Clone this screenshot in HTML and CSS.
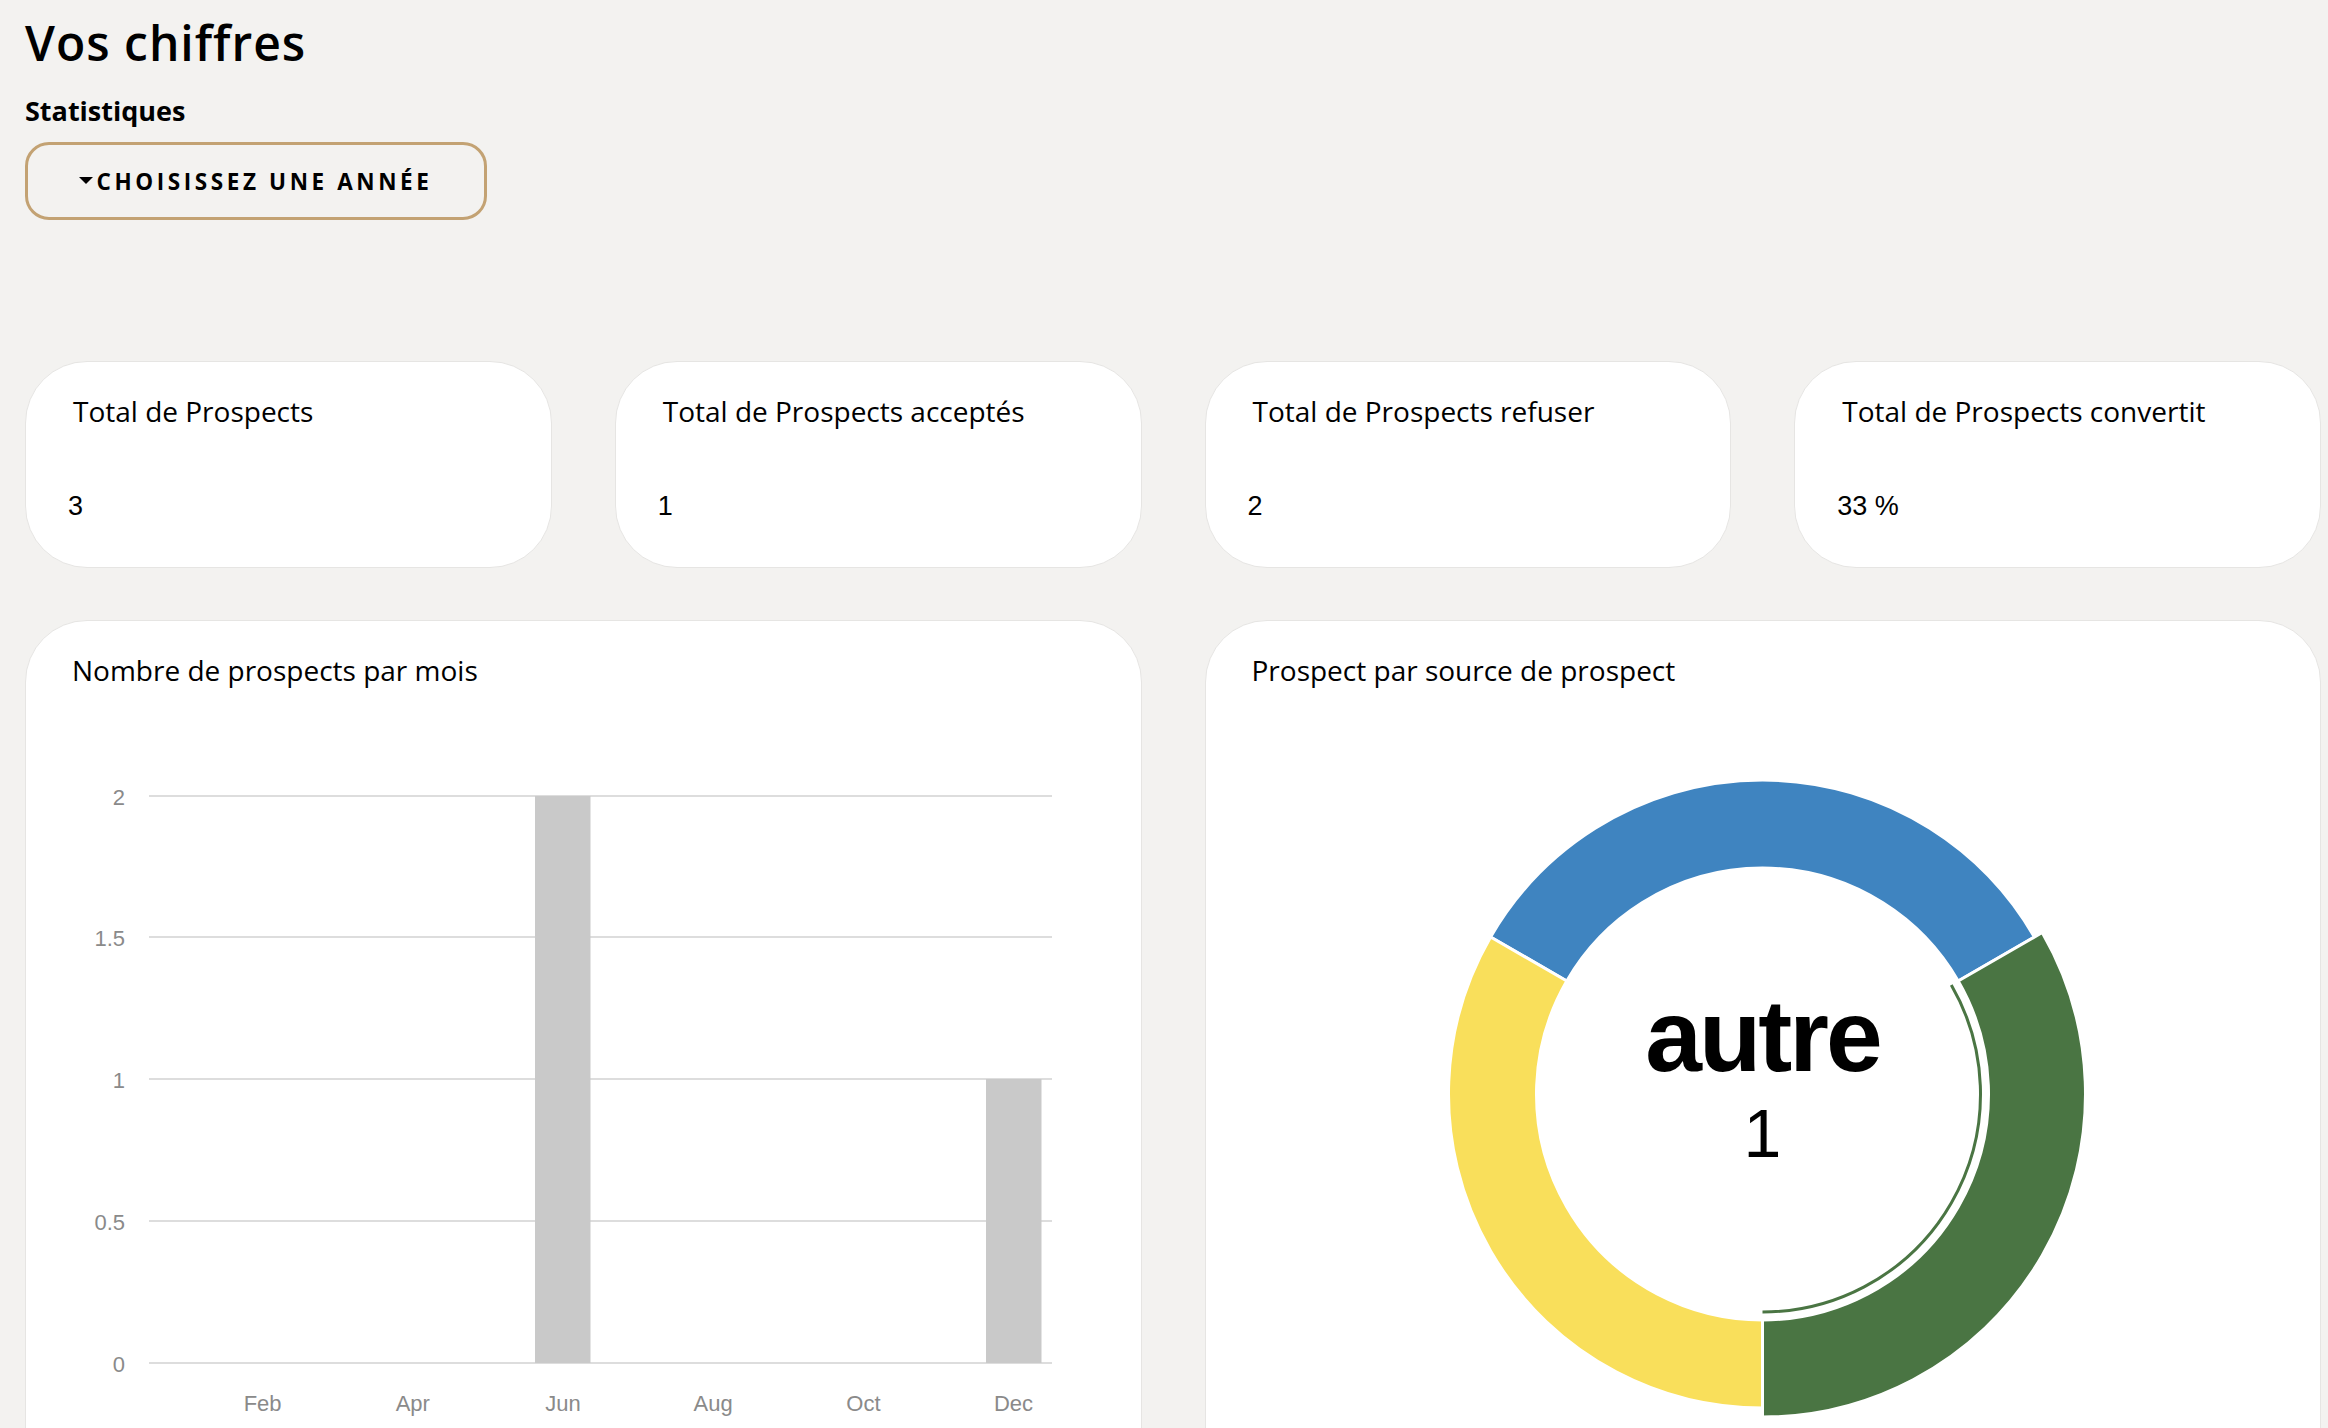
FILE: index.html
```html
<!DOCTYPE html>
<html lang="fr">
<head>
<meta charset="utf-8">
<title>Vos chiffres</title>
<link rel="stylesheet" href="styles.css">
</head>
<body>
<div class="page">
  <h1 class="page-title">Vos chiffres</h1>
  <h2 class="section-title">Statistiques</h2>
  <button class="year-btn" type="button"><span class="caret"></span>CHOISISSEZ UNE ANNÉE</button>

  <div class="grid">
    <div class="card stat">
      <div class="card-title">Total de Prospects</div>
      <div class="stat-value">3</div>
    </div>
    <div class="card stat">
      <div class="card-title">Total de Prospects acceptés</div>
      <div class="stat-value">1</div>
    </div>
    <div class="card stat">
      <div class="card-title">Total de Prospects refuser</div>
      <div class="stat-value">2</div>
    </div>
    <div class="card stat">
      <div class="card-title">Total de Prospects convertit</div>
      <div class="stat-value">33 %</div>
    </div>

    <div class="card chart">
      <div class="card-title">Nombre de prospects par mois</div>
      <svg class="chart-svg" width="1114" height="760" viewBox="1 70 1114 760">
        <g class="grid-lines">
          <line x1="124" y1="175" x2="1027" y2="175"/>
          <line x1="124" y1="316" x2="1027" y2="316"/>
          <line x1="124" y1="458" x2="1027" y2="458"/>
          <line x1="124" y1="600" x2="1027" y2="600"/>
          <line x1="124" y1="742" x2="1027" y2="742"/>
        </g>
        <rect class="bar" x="510" y="175" width="55.5" height="567"/>
        <rect class="bar" x="961" y="458" width="55.5" height="284"/>
        <g class="y-labels">
          <text x="100" y="183.5">2</text>
          <text x="100" y="324.5">1.5</text>
          <text x="100" y="466.5">1</text>
          <text x="100" y="608.5">0.5</text>
          <text x="100" y="750.5">0</text>
        </g>
        <g class="x-labels">
          <text x="237.6" y="790">Feb</text>
          <text x="387.8" y="790">Apr</text>
          <text x="538" y="790">Jun</text>
          <text x="688.2" y="790">Aug</text>
          <text x="838.4" y="790">Oct</text>
          <text x="988.5" y="790">Dec</text>
        </g>
      </svg>
    </div>

    <div class="card chart">
      <div class="card-title">Prospect par source de prospect</div>
      <svg class="chart-svg" width="1114" height="760" viewBox="1 70 1114 760">
        <path class="seg seg-blue" d="M 285.57 316 A 314 314 0 0 1 829.43 316 L 753.22 360 A 226 226 0 0 0 361.78 360 Z"/>
        <path class="seg seg-yellow" d="M 557.5 787 A 314 314 0 0 1 285.57 316 L 361.78 360 A 226 226 0 0 0 557.5 699 Z"/>
        <path class="seg seg-green" d="M 837.22 311.5 A 323 323 0 0 1 557.5 796 L 557.5 699 A 226 226 0 0 0 753.22 360 Z"/>
        <path class="seg-ring" d="M 746.29 364 A 218 218 0 0 1 557.5 691"/>
        <text class="donut-label" x="557.5" y="450">autre</text>
        <text class="donut-value" x="557.5" y="536">1</text>
      </svg>
    </div>
  </div>
</div>
</body>
</html>
```

FILE: styles.css
```css
html, body {
  margin: 0;
  padding: 0;
  background: #f3f2f0;
}

.page {
  box-sizing: border-box;
  height: 1428px;
  overflow: hidden;
  padding: 11px 7px 0 25px;
  font-family: "Open Sans", "Noto Sans", sans-serif;
  color: #000;
}

.page-title {
  margin: 0;
  font-size: 48px;
  font-weight: 600;
  letter-spacing: 1px;
  line-height: 64px;
}

.section-title {
  margin: 16px 0 0;
  font-size: 27px;
  font-weight: 700;
  line-height: 40px;
}

.year-btn {
  box-sizing: border-box;
  margin-top: 11px;
  width: 462px;
  height: 78px;
  border: 3px solid #c3a273;
  border-radius: 24px;
  background: transparent;
  display: flex;
  align-items: center;
  justify-content: center;
  font-family: "Open Sans", "Noto Sans", sans-serif;
  font-size: 22.5px;
  font-weight: 700;
  letter-spacing: 3.6px;
  color: #000;
  padding: 0;
}

.caret {
  width: 0;
  height: 0;
  border-left: 7px solid transparent;
  border-right: 7px solid transparent;
  border-top: 7px solid #000;
  margin-right: 3px;
  margin-top: -2px;
}

.grid {
  margin-top: 141px;
  display: grid;
  grid-template-columns: repeat(4, 1fr);
  column-gap: 63px;
  row-gap: 52px;
}

.card {
  box-sizing: border-box;
  background: #fff;
  border: 1px solid #e6e5e3;
  border-radius: 62px;
}

.stat {
  height: 207px;
  padding: 29px 0 0 42px;
}

.card-title {
  font-size: 28px;
  line-height: 40px;
  padding-left: 5px;
  white-space: nowrap;
}

.stat-value {
  margin-top: 55px;
  font-family: "Liberation Sans", Arial, sans-serif;
  font-size: 27px;
  line-height: 40px;
}

.chart {
  grid-column: span 2;
  height: 900px;
  padding-top: 30px;
  border-radius: 62px 62px 0 0;
}

.chart .card-title {
  padding-left: 46px;
  margin-top: -1px;
  margin-bottom: 1px;
}

.chart-svg {
  display: block;
  overflow: visible;
}

.grid-lines line {
  stroke: #d2d2d2;
  stroke-width: 1.5;
}

.bar {
  fill: #c9c9c9;
}

.y-labels text,
.x-labels text {
  font-family: "Liberation Sans", Arial, sans-serif;
  font-size: 22px;
  fill: #8a8a8a;
}

.y-labels text {
  text-anchor: end;
}

.x-labels text {
  text-anchor: middle;
}

.seg {
  stroke: #fff;
  stroke-width: 3;
  stroke-linejoin: round;
}

.seg-blue { fill: #3f84c0; }
.seg-yellow { fill: #f9df5b; }
.seg-green { fill: #4a7543; }

.seg-ring {
  fill: none;
  stroke: #4a7543;
  stroke-width: 3;
}

.donut-label {
  font-family: "Liberation Sans", Arial, sans-serif;
  font-size: 102px;
  font-weight: 700;
  letter-spacing: -3px;
  text-anchor: middle;
  fill: #000;
}

.donut-value {
  font-family: "Liberation Sans", Arial, sans-serif;
  font-size: 68px;
  text-anchor: middle;
  fill: #000;
}
```
